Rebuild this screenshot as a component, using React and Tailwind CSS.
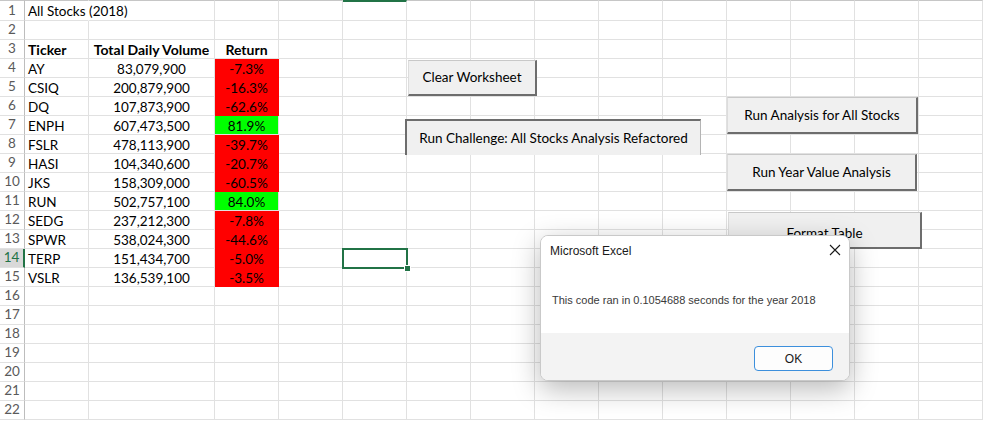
import React from "react";

const COLS = 15; // header + A..N
const data = [
  ["AY", "83,079,900", "-7.3%", false],
  ["CSIQ", "200,879,900", "-16.3%", false],
  ["DQ", "107,873,900", "-62.6%", false],
  ["ENPH", "607,473,500", "81.9%", true],
  ["FSLR", "478,113,900", "-39.7%", false],
  ["HASI", "104,340,600", "-20.7%", false],
  ["JKS", "158,309,000", "-60.5%", false],
  ["RUN", "502,757,100", "84.0%", true],
  ["SEDG", "237,212,300", "-7.8%", false],
  ["SPWR", "538,024,300", "-44.6%", false],
  ["TERP", "151,434,700", "-5.0%", false],
  ["VSLR", "136,539,100", "-3.5%", false],
];

function cellContent(r, c) {
  if (r === 1 && c === 1) return { text: "All Stocks (2018)", align: "left", noRight: true };
  if (r === 3) {
    if (c === 1) return { text: "Ticker", align: "left", bold: true, bottom: true };
    if (c === 2) return { text: "Total Daily Volume", align: "center", bold: true, bottom: true };
    if (c === 3) return { text: "Return", align: "center", bold: true };
  }
  if (r >= 4 && r <= 15) {
    const d = data[r - 4];
    if (c === 1) return { text: d[0], align: "left" };
    if (c === 2) return { text: d[1], align: "center" };
    if (c === 3) return { text: d[2], align: "center", fill: d[3] ? "green" : "red" };
  }
  return null;
}

function Row({ r }) {
  const first = r === 1;
  const sel = r === 14;
  const cells = [];
  cells.push(
    <div
      key="h"
      className={`${first ? "h-[21px] border-t border-t-[#c6c6c6]" : "h-[19px]"} flex items-center justify-center border-b border-b-[#e1e1e1] ${
        sel
          ? "bg-[#d9d9d9] text-[#217346] border-r-2 border-r-[#217346]"
          : "bg-white text-[#5a5a5a] border-r border-r-[#bdbdbd]"
      } text-[13.5px] leading-none`}
    >
      {r}
    </div>
  );
  for (let c = 1; c < COLS; c++) {
    const cc = cellContent(r, c);
    let top = "";
    if (first) top = c === 5 ? " border-t-2 border-t-[#217346]" : " border-t border-t-[#c6c6c6]";
    let cls = `${first ? "h-[21px]" : "h-[19px]"}${top} relative border-r border-b border-r-[#e1e1e1] border-b-[#e1e1e1] whitespace-nowrap text-[13.5px] leading-[20px] text-black`;
    if (cc) {
      if (cc.fill === "red") cls += " bg-[#ff0000] border-r-[#ff0000] border-b-[#ff0000]";
      if (cc.fill === "green") cls += " bg-[#00ff00] border-r-[#00ff00] border-b-[#00ff00]";
      if (cc.noRight) cls += " border-r-transparent";
      if (cc.bottom) cls += " border-b-[#000000]";
      if (cc.bold) cls += " font-bold text-[14px]";
      cls += cc.align === "left" ? " pl-[3px] text-left" : " text-center";
    }
    cells.push(
      <div key={c} className={cls}>
        {cc ? cc.text : null}
        {sel && c === 5 ? (
          <div className="absolute z-10 left-[-1px] top-[-1px] w-[66px] h-[21px] border-2 border-[#217346]">
            <div className="absolute right-[-5px] bottom-[-5px] w-[7px] h-[7px] bg-[#217346] border border-white" />
          </div>
        ) : null}
      </div>
    );
  }
  return <>{cells}</>;
}

function XlButton({ className, children, pressed }) {
  const border = pressed
    ? "border-t-2 border-l-2 border-t-[#6d6d6d] border-l-[#6d6d6d] border-r border-r-[#b4b4b4]"
    : "border-t border-l border-t-[#c8c8c8] border-l-[#dcdcdc] border-r-2 border-b-2 border-r-[#6d6d6d] border-b-[#6d6d6d]";
  return (
    <div
      className={`absolute flex items-center justify-center bg-[#f0f0f0] ${border} text-[13.5px] text-black whitespace-nowrap ${className}`}
    >
      {children}
    </div>
  );
}

export default function App() {
  const rows = [];
  for (let r = 1; r <= 22; r++) rows.push(<Row key={r} r={r} />);
  return (
    <div
      className="relative w-[983px] h-[421px] overflow-hidden bg-white"
      style={{ fontFamily: "Lato, 'Liberation Sans', sans-serif" }}
    >
      <div className="grid grid-cols-[25px_64px_126px_64px_64px_64px_64px_64px_64px_64px_64px_64px_64px_64px_64px]">
        {rows}
      </div>

      {/* Form buttons floating on the sheet canvas */}
      <XlButton className="left-[408px] top-[60px] w-[129px] h-[36px]">Clear Worksheet</XlButton>
      <XlButton pressed className="left-[405px] top-[119px] w-[296px] h-[36px]">
        Run Challenge: All Stocks Analysis Refactored
      </XlButton>
      <XlButton className="left-[727px] top-[97px] w-[191px] h-[37px]">Run Analysis for All Stocks</XlButton>
      <XlButton className="left-[727px] top-[154px] w-[190px] h-[37px]">Run Year Value Analysis</XlButton>
      <XlButton className="left-[728px] top-[212px] w-[194px] h-[37px] pt-[7px]">Format Table</XlButton>

      {/* Message box */}
      <div
        className="absolute z-20 left-[540px] top-[235px] w-[310px] h-[146px] rounded-[8px] bg-white border border-[#c9c9c9] shadow-[0_8px_28px_rgba(0,0,0,0.28)] overflow-hidden flex flex-col"
        style={{ fontFamily: "'Liberation Sans', Arial, sans-serif" }}
      >
        <div className="h-[97px] flex flex-col bg-white">
          <div className="flex items-start justify-between pl-[9px] pr-[8px] pt-[7px]">
            <span className="text-[12px] leading-[16px] text-[#1a1a1a]">Microsoft Excel</span>
            <svg className="mt-[1px]" width="12" height="12" viewBox="0 0 12 12">
              <path d="M1 1 L11 11 M11 1 L1 11" stroke="#1a1a1a" strokeWidth="1.1" fill="none" />
            </svg>
          </div>
          <div className="pl-[11px] pt-[34px] text-[11px] leading-[14px] text-[#3a3a3a]">
            This code ran in 0.1054688 seconds for the year 2018
          </div>
        </div>
        <div className="flex-1 bg-[#f3f3f3] flex justify-end items-start pt-[13px] pr-[16px]">
          <div className="w-[79px] h-[25px] rounded-[4px] bg-[#fdfdfd] border border-[#3c8fdc] flex items-center justify-center text-[12px] text-[#1a1a1a]">
            OK
          </div>
        </div>
      </div>
    </div>
  );
}
